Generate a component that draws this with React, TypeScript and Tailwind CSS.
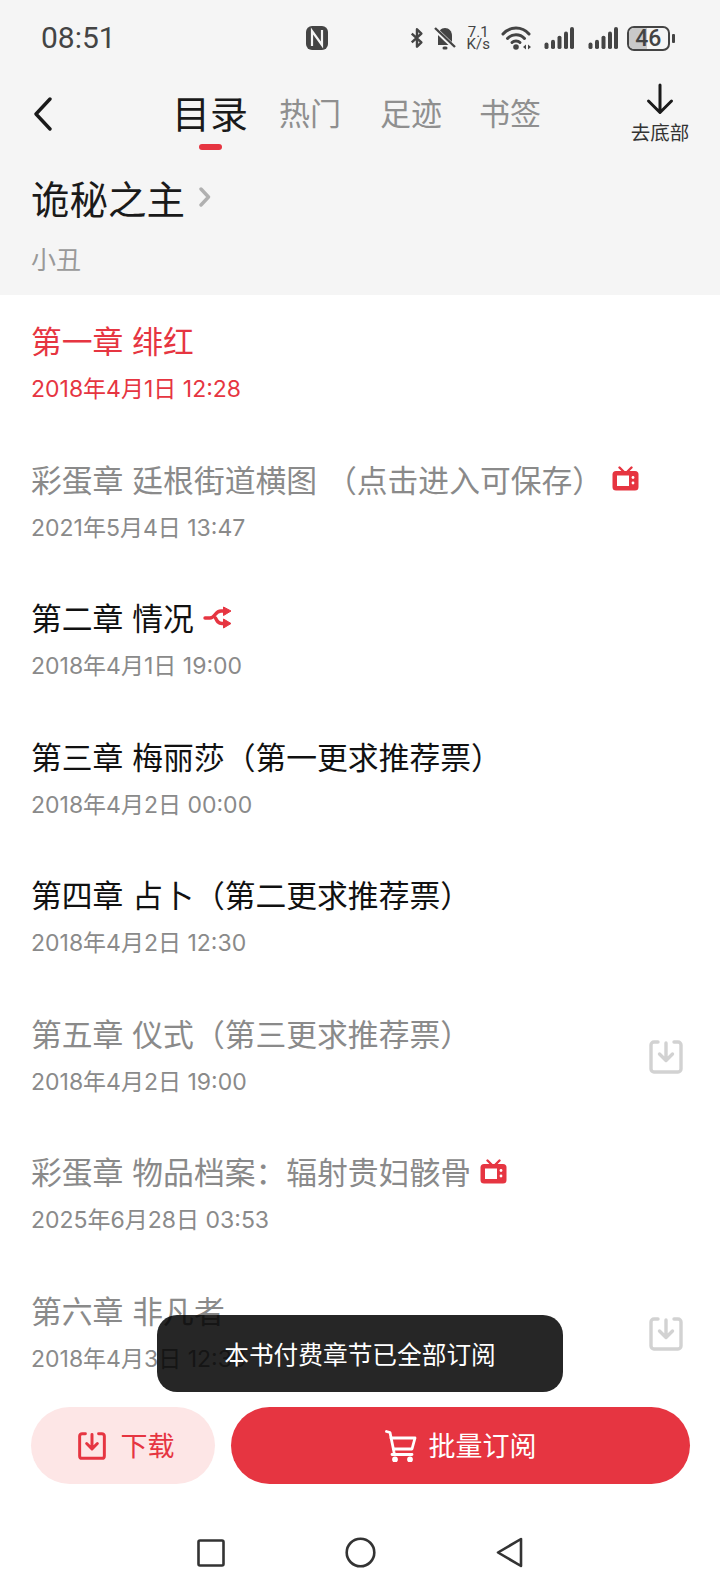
import React from "react";

const cjk = { fontFamily: '"Noto Sans CJK SC", sans-serif' };
const roboto = { fontFamily: 'Roboto, "Noto Sans CJK SC", sans-serif' };
const inter = { fontFamily: 'Inter, "Noto Sans CJK SC", sans-serif' };

function TvIcon() {
  return (
    <svg width="27" height="25" viewBox="0 0 27 25" className="shrink-0">
      <path d="M7.5 1.5 L12 6 M19.5 1.5 L15 6" stroke="#e63541" strokeWidth="2.4" strokeLinecap="round" fill="none" />
      <rect x="0.5" y="5" width="26" height="19.5" rx="3.5" fill="#e63541" />
      <rect x="5" y="9.5" width="12" height="10.5" fill="#fff" />
      <circle cx="21" cy="11.5" r="1.4" fill="#fff" />
      <circle cx="21" cy="17" r="1.4" fill="#fff" />
    </svg>
  );
}

function ShareIcon() {
  return (
    <svg width="29" height="23" viewBox="0 0 29 23" className="shrink-0">
      <path d="M2 12 H7 C12 12 12 5 18 5 H23 M12.5 12 C14 15 15 17.5 19 17.5 H23" stroke="#e63541" strokeWidth="3.4" fill="none" strokeLinejoin="round" strokeLinecap="round" />
      <path d="M20.5 1 L28 5 L20.5 9.5 Z M20.5 13 L28 17.5 L20.5 22 Z" fill="#e63541" stroke="#e63541" strokeWidth="1" strokeLinejoin="round" />
    </svg>
  );
}

function SaveIcon({ color, w = 34, h = 34, sw = 3 }: { color: string; w?: number; h?: number; sw?: number }) {
  return (
    <svg width={w} height={h} viewBox="0 0 34 34" className="shrink-0" fill="none" stroke={color} strokeWidth={sw} strokeLinecap="round" strokeLinejoin="round">
      <path d="M9 2 H5 a3 3 0 0 0 -3 3 V29 a3 3 0 0 0 3 3 H29 a3 3 0 0 0 3 -3 V5 a3 3 0 0 0 -3 -3 H25" />
      <path d="M17 3 V20 M10.5 14 L17 20.5 L23.5 14" />
    </svg>
  );
}

type Row = { t: string; d: string; c: string; icon?: "tv" | "share"; save?: boolean; dc?: string };

const rows: Row[] = [
  { t: "第一章 绯红", d: "2018年4月1日 12:28", c: "text-[#e63541]", dc: "text-[#e63541]" },
  { t: "彩蛋章 廷根街道横图 （点击进入可保存）", d: "2021年5月4日 13:47", c: "text-[#8a8a8a]", icon: "tv" },
  { t: "第二章 情况", d: "2018年4月1日 19:00", c: "text-[#111111]", icon: "share" },
  { t: "第三章 梅丽莎（第一更求推荐票）", d: "2018年4月2日 00:00", c: "text-[#111111]" },
  { t: "第四章 占卜（第二更求推荐票）", d: "2018年4月2日 12:30", c: "text-[#111111]" },
  { t: "第五章 仪式（第三更求推荐票）", d: "2018年4月2日 19:00", c: "text-[#8a8a8a]", save: true },
  { t: "彩蛋章 物品档案：辐射贵妇骸骨", d: "2025年6月28日 03:53", c: "text-[#8a8a8a]", icon: "tv" },
  { t: "第六章 非凡者", d: "2018年4月3日 12:30", c: "text-[#8a8a8a]", save: true },
];

function StatusBar() {
  return (
    <div className="flex h-[75px] items-center pl-[41px] pt-[1px] text-[#444444]">
      <span className="text-[30px] leading-none" style={roboto}>08:51</span>
      <svg width="22" height="24" viewBox="0 0 22 24" className="ml-[190px]">
        <rect x="0" y="0" width="22" height="24" rx="6" fill="#444" />
        <path d="M6 20 V5 L16 19 V4" fill="none" stroke="#f5f5f5" strokeWidth="2.2" />
      </svg>
      <svg width="14" height="24" viewBox="0 0 16 24" className="ml-[82px]">
        <path d="M2 7 L13 17 L8 22 L8 2 L13 7 L2 17" fill="none" stroke="#444" strokeWidth="2.8" strokeLinejoin="round" />
      </svg>
      <svg width="22" height="24" viewBox="0 0 22 24" className="ml-[10px]">
        <path d="M4 19 L4 10 C4 5 7 2 11 2 C15 2 18 5 18 10 L18 19 Z" fill="#444" />
        <rect x="8.5" y="20.5" width="5" height="3" rx="1.5" fill="#444" />
        <path d="M1 3 L21 22" stroke="#f5f5f5" strokeWidth="4.5" />
        <path d="M1 2 L21 21" stroke="#444" strokeWidth="2.4" />
      </svg>
      <div className="ml-[11px] flex w-[23px] flex-col items-center text-[15px] leading-[12px]" style={roboto}>
        <span>7.1</span>
        <span>K/s</span>
      </div>
      <svg width="31" height="24" viewBox="0 0 31 24" className="ml-[11px]">
        <path d="M2 8 C9 0 21 0 28 8" fill="none" stroke="#444" strokeWidth="3" strokeLinecap="round" />
        <path d="M6.5 12.5 C11 7.5 19 7.5 23.5 12.5" fill="none" stroke="#444" strokeWidth="3" strokeLinecap="round" />
        <path d="M11 16.5 C13 14.5 17 14.5 19 16.5" fill="none" stroke="#444" strokeWidth="3" strokeLinecap="round" />
        <circle cx="15" cy="21" r="2.8" fill="#444" />
        <path d="M22 21 L25 18.5 V23.5 Z M27 18.5 L30 21 L27 23.5 Z" fill="#444" />
      </svg>
      {[0, 1].map((k) => (
        <svg key={k} width="30" height="22" viewBox="0 0 30 24" className={k === 0 ? "ml-[12px]" : "ml-[14px]"} preserveAspectRatio="none">
          <rect x="0.5" y="17" width="4" height="7" rx="2" fill="#444" />
          <rect x="7" y="14" width="4" height="10" rx="2" fill="#444" />
          <rect x="13.5" y="9.5" width="4" height="14.5" rx="2" fill="#444" />
          <rect x="20" y="5" width="4" height="19" rx="2" fill="#444" />
          <rect x="26" y="0" width="4" height="24" rx="2" fill="#444" />
        </svg>
      ))}
      <div className="relative ml-[9px] flex h-[25px] w-[43px] shrink-0 items-center justify-center overflow-hidden rounded-[7px] border-2 border-[#444444]">
        <div className="absolute inset-y-0 left-0 w-[46%] bg-[#c9c9c9]" />
        <span className="relative text-[23px] font-medium leading-none" style={roboto}>46</span>
      </div>
      <div className="ml-[2px] h-[9px] w-[3px] shrink-0 rounded-[1px] bg-[#444444]" />
    </div>
  );
}

function Header() {
  return (
    <div className="h-[295px] shrink-0 bg-[#f5f5f5]">
      <StatusBar />
      <div className="flex h-[80px] items-start">
        <svg width="20" height="34" viewBox="0 0 20 34" className="ml-[33px] mt-[22px]">
          <path d="M17 2 L3 17 L17 32" fill="none" stroke="#1a1a1a" strokeWidth="3.4" strokeLinecap="round" strokeLinejoin="round" />
        </svg>
        <div className="ml-[119px] flex w-[76px] flex-col items-center">
          <span className="mt-[12px] text-[38px] leading-[50px] text-[#1a1a1a]">目录</span>
          <div className="mt-[7px] h-[6px] w-[23px] rounded-full bg-[#e63541]" />
        </div>
        <span className="ml-[31px] mt-[15px] text-[31px] leading-[44px] text-[#8f8f8f]">热门</span>
        <span className="ml-[39px] mt-[15px] text-[31px] leading-[44px] text-[#8f8f8f]">足迹</span>
        <span className="ml-[37px] mt-[15px] text-[31px] leading-[44px] text-[#8f8f8f]">书签</span>
        <div className="ml-[90px] flex w-[58px] flex-col items-center">
          <svg width="28" height="38" viewBox="0 0 28 38" className="mt-[8px]">
            <path d="M14 2 V29 M2.5 18 L14 29.5 L25.5 18" fill="none" stroke="#1a1a1a" strokeWidth="3" strokeLinecap="round" strokeLinejoin="round" />
          </svg>
          <span className="mt-[-2px] text-[19.5px] leading-[26px] whitespace-nowrap text-[#333333]">去底部</span>
        </div>
      </div>
      <div className="mt-[16px] flex items-center pl-[31px]">
        <span className="text-[38.5px] leading-[52px] text-[#1a1a1a]">诡秘之主</span>
        <svg width="12" height="20" viewBox="0 0 12 20" className="ml-[14px]">
          <path d="M2 2 L9.5 10 L2 18" fill="none" stroke="#b0b0b0" strokeWidth="3.4" strokeLinecap="round" strokeLinejoin="round" />
        </svg>
      </div>
      <div className="mt-[17px] pl-[31px] text-[25px] leading-[36px] text-[#999999]">小丑</div>
    </div>
  );
}

function ChapterRow({ r }: { r: Row }) {
  return (
    <div className="flex h-[138.5px] shrink-0 items-start justify-between pl-[31px] pr-[37px]">
      <div>
        <div className="flex h-[42px] items-center gap-[9px]">
          <span className={`text-[30.8px] leading-[42px] whitespace-pre [word-spacing:2px] ${r.c}`}>{r.t}</span>
          {r.icon === "tv" && <TvIcon />}
          {r.icon === "share" && <ShareIcon />}
        </div>
        <div className={`mt-[12px] text-[23px] leading-[32px] whitespace-pre ${r.dc ?? "text-[#8a8a8a]"}`} style={inter}>
          {r.d}
        </div>
      </div>
      {r.save && (
        <div className="mt-[28px]">
          <SaveIcon color="#d2d2d2" sw={3.4} />
        </div>
      )}
    </div>
  );
}

export default function App() {
  return (
    <div className="relative flex h-[1592px] w-[720px] flex-col overflow-hidden bg-white" style={cjk}>
      <Header />
      <div className="flex min-h-0 flex-1 flex-col overflow-hidden pt-[24px]">
        {rows.map((r) => (
          <ChapterRow key={r.t} r={r} />
        ))}
      </div>
      <div className="h-[207px] shrink-0 bg-white">
        <div className="mt-[22px] flex gap-[16px] pl-[31px] pr-[30px]">
          <div className="flex h-[77px] w-[184px] items-center justify-center gap-[15px] rounded-full bg-[#fde6e6] pl-[6px]">
            <SaveIcon color="#e63541" w={28} h={28} sw={3.6} />
            <span className="text-[27px] text-[#e63541]">下载</span>
          </div>
          <div className="flex h-[77px] flex-1 items-center justify-center gap-[12px] rounded-full bg-[#e63541]">
            <svg width="32" height="32" viewBox="0 0 32 32" fill="none" stroke="#fff" strokeWidth="2.8" strokeLinecap="round" strokeLinejoin="round">
              <path d="M1.5 1.5 L5 2.5 L9 22 C9.5 24 8 24.5 7 24.5 H27" />
              <path d="M6 8 H30 L27 19 H8.5" />
              <circle cx="10" cy="29.5" r="1.5" fill="#fff" />
              <circle cx="25" cy="29.5" r="1.5" fill="#fff" />
            </svg>
            <span className="text-[27px] text-white">批量订阅</span>
          </div>
        </div>
        <div className="mt-[53px] flex items-center justify-center gap-[120px]">
          <svg width="28" height="28" viewBox="0 0 28 28"><rect x="1.5" y="1.5" width="25" height="25" rx="1.5" fill="none" stroke="#333" strokeWidth="2.6" /></svg>
          <svg width="31" height="31" viewBox="0 0 31 31"><circle cx="15.5" cy="15.5" r="13.8" fill="none" stroke="#333" strokeWidth="2.6" /></svg>
          <svg width="27" height="31" viewBox="0 0 27 31"><path d="M25 2 V29 L2 15.5 Z" fill="none" stroke="#333" strokeWidth="2.6" strokeLinejoin="round" /></svg>
        </div>
      </div>
      <div className="absolute left-[157px] top-[1315px] flex h-[77px] w-[406px] items-center justify-center rounded-[20px] bg-black/85">
        <span className="text-[24.7px] text-white">本书付费章节已全部订阅</span>
      </div>
    </div>
  );
}
